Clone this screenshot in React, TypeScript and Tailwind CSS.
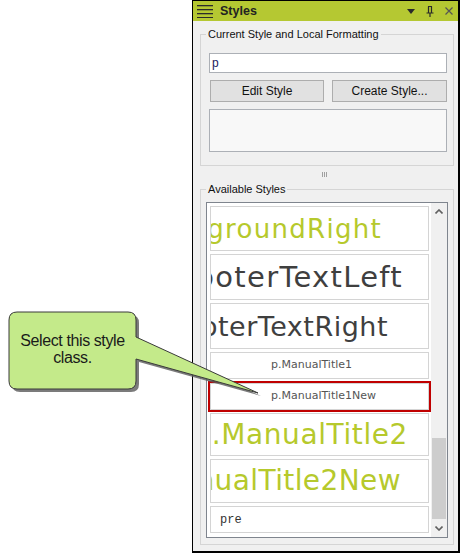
import React, { FC } from 'react';

const ui = { fontFamily: '"Liberation Sans", Arial, sans-serif' };
const gothic = { fontFamily: '"DejaVu Sans", "Liberation Sans", sans-serif' };
const mono = { fontFamily: '"Liberation Mono", "Courier New", monospace' };

interface StyleItem {
  label: string;
  kind: 'big' | 'small' | 'mono';
  color?: string;
  size?: number;
  track?: number;
  pr?: number;
  h: number;
  selected?: boolean;
}

const items: StyleItem[] = [
  { label: 'p.BackgroundRight', kind: 'big', color: '#b6c92c', size: 26, track: 1.3, pr: 46, h: 45 },
  { label: 'p.FooterTextLeft', kind: 'big', color: '#3f3f3f', size: 29, track: 1.3, pr: 25, h: 46 },
  { label: 'p.FooterTextRight', kind: 'big', color: '#3f3f3f', size: 27, track: 0.5, pr: 40, h: 46 },
  { label: 'p.ManualTitle1', kind: 'small', h: 27 },
  { label: 'p.ManualTitle1New', kind: 'small', h: 27, selected: true },
  { label: 'p.ManualTitle2', kind: 'big', color: '#b6c92c', size: 28, track: 0.6, pr: 20, h: 43 },
  { label: 'p.ManualTitle2New', kind: 'big', color: '#b6c92c', size: 28, track: 0.4, pr: 27, h: 44 },
  { label: 'pre', kind: 'mono', h: 27 },
];

const StyleRow: FC<{ item: StyleItem }> = ({ item }) => {
  if (item.kind === 'big') {
    return (
      <div
        className="flex items-center justify-end overflow-hidden border border-[#d4d4d4] bg-white whitespace-nowrap"
        style={{ height: item.h, paddingRight: item.pr }}
      >
        <span
          className="leading-none"
          style={{ ...gothic, color: item.color, fontSize: item.size, letterSpacing: item.track }}
        >
          {item.label}
        </span>
      </div>
    );
  }
  if (item.kind === 'mono') {
    return (
      <div
        className="flex items-center border border-[#d4d4d4] bg-white pl-[9px] text-[12px] text-[#333]"
        style={{ ...mono, height: item.h }}
      >
        pre
      </div>
    );
  }
  return (
    <div
      className={
        'flex items-center border border-[#d4d4d4] bg-white pl-[60px] text-[11px] text-[#555] ' +
        (item.selected ? 'outline-2 outline-[#c00000] mt-[1px]' : '')
      }
      style={{ ...gothic, height: item.h }}
    >
      {item.label}
    </div>
  );
};

const bubble =
  'M17 312 H128 Q136 312 136 320 V337 L258 393 L136 359 V381 Q136 389 128 389 H17 Q9 389 9 381 V320 Q9 312 17 312 Z';

const Callout: FC = () => (
  <>
    <svg className="pointer-events-none absolute left-0 top-0" width="460" height="555">
      <path d={bubble} fill="#5a5a5a" transform="translate(3 3)" opacity="0.8" />
      <path d={bubble} fill="#c4ea8a" stroke="#3a3a3a" strokeWidth="1" />
    </svg>
    <div
      className="absolute left-[9px] top-[332px] w-[127px] text-center text-[16px] leading-[17px] tracking-[-0.4px] text-[#1a1a1a]"
      style={ui}
    >
      Select this style
      <br />
      class.
    </div>
  </>
);

export default function App() {
  return (
    <div className="relative h-[555px] w-[460px] overflow-hidden bg-white" style={ui}>
      <div className="ml-[192px] flex h-[553px] w-[268px] flex-col border-l border-t border-r-2 border-b-2 border-black bg-[#f0f0f0]">
        {/* title bar */}
        <div className="flex h-[20px] items-center bg-[#b5c832] pl-[4px] pr-[5px]">
          <svg width="16" height="13" viewBox="0 0 16 13" className="mr-[7px]">
            <rect x="0" y="0" width="16" height="1.3" fill="#2b2b2b" />
            <rect x="0" y="4" width="16" height="1.3" fill="#2b2b2b" />
            <rect x="0" y="8" width="16" height="1.3" fill="#2b2b2b" />
            <rect x="0" y="12" width="16" height="1.3" fill="#2b2b2b" />
          </svg>
          <span className="text-[12.5px] font-bold text-[#222]">Styles</span>
          <div className="ml-auto flex items-center gap-[11px]">
            <svg width="8" height="5" viewBox="0 0 8 5">
              <path d="M0 0 H8 L4 5 Z" fill="#2a2a2a" />
            </svg>
            <svg width="8" height="11" viewBox="0 0 8 11">
              <path d="M2 0.5 H6 M2.5 0.5 V7 M5.5 0.5 V7 M0.5 7 H7.5 M4 7 V11" stroke="#2a2a2a" strokeWidth="1.2" fill="none" />
            </svg>
            <svg width="8" height="8" viewBox="0 0 8 8">
              <path d="M0.5 0.5 L7.5 7.5 M7.5 0.5 L0.5 7.5" stroke="#555" strokeWidth="1.2" />
            </svg>
          </div>
        </div>

        {/* current style */}
        <fieldset className="ml-[7px] mt-[6px] w-[254px] border border-[#d5d5d5] px-[5px] pt-[12px] pb-[13px]">
          <legend className="px-[2px] text-[11px] leading-[14px] text-[#111]">
            Current Style and Local Formatting
          </legend>
          <div className="ml-[3px] mr-[1px] flex flex-col gap-[7px]">
            <div className="flex h-[20px] items-center border border-[#acb0b6] bg-white pl-[2px] text-[12px] text-[#1b1b60]">
              p
            </div>
            <div className="flex gap-[8px] pl-[1px]">
              <button className="h-[22px] w-[114px] border border-[#adadad] bg-[#e1e1e1] text-[12px] text-[#111]">
                Edit Style
              </button>
              <button className="h-[22px] w-[115px] border border-[#adadad] bg-[#e1e1e1] text-[12px] text-[#111]">
                Create Style...
              </button>
            </div>
            <div className="h-[43px] border border-[#acb0b6] bg-[#f8f8f8]" />
          </div>
        </fieldset>

        {/* splitter grip */}
        <div className="flex h-[16px] items-center justify-center gap-[1px] pr-[3px]">
          <span className="h-[5px] w-px bg-[#a0a0a0]" />
          <span className="h-[5px] w-px bg-[#a0a0a0]" />
          <span className="h-[5px] w-px bg-[#a0a0a0]" />
        </div>

        {/* available styles */}
        <fieldset className="ml-[7px] w-[254px] border border-[#d5d5d5] px-[5px] pt-[6px] pb-[6px]">
          <legend className="px-[2px] text-[11px] leading-[14px] text-[#111]">Available Styles</legend>
          <div className="flex h-[336px] w-[242px] border border-[#7f858e] bg-white">
            <div className="flex w-[222px] flex-col gap-[3px] pl-[3px] pt-[3px]">
              {items.map((it) => (
                <StyleRow key={it.label} item={it} />
              ))}
            </div>
            <div className="ml-[2px] flex w-[16px] flex-col bg-[#f0f0f0]">
              <div className="flex h-[17px] items-center justify-center">
                <svg width="8" height="5" viewBox="0 0 8 5">
                  <path d="M0.5 4.5 L4 1 L7.5 4.5" stroke="#606060" strokeWidth="1.6" fill="none" />
                </svg>
              </div>
              <div className="flex flex-1 flex-col justify-end pb-[1px]">
                <div className="mx-[1px] h-[81px] bg-[#cdcdcd]" />
              </div>
              <div className="flex h-[17px] items-center justify-center">
                <svg width="8" height="5" viewBox="0 0 8 5">
                  <path d="M0.5 0.5 L4 4 L7.5 0.5" stroke="#606060" strokeWidth="1.6" fill="none" />
                </svg>
              </div>
            </div>
          </div>
        </fieldset>
      </div>
      <Callout />
    </div>
  );
}
